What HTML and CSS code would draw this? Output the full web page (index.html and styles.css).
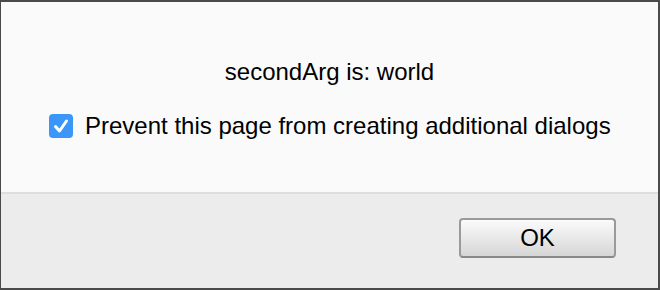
FILE: index.html
```html
<!DOCTYPE html>
<html>
<head>
  <title>Alert</title>
  <link rel="stylesheet" href="styles.css">
</head>
<body>
  <div class="dialog">
    <div class="dialog-body">
      <p class="message">secondArg is: world</p>
      <label class="prevent">
        <span class="checkbox">
          <svg width="24" height="24" viewBox="0 0 24 24">
            <path d="M6.5 12.5 L10.5 17 L17.5 7" fill="none" stroke="#fff" stroke-width="3" stroke-linecap="round" stroke-linejoin="round"/>
          </svg>
        </span>
        Prevent this page from creating additional dialogs
      </label>
    </div>
    <div class="dialog-footer">
      <button class="ok-button">OK</button>
    </div>
  </div>
</body>
</html>
```

FILE: styles.css
```css
body {
  margin: 0;
  font-family: "Liberation Sans", Arial, sans-serif;
}
.dialog {
  box-sizing: border-box;
  width: 660px;
  height: 290px;
  border: 2px solid #4a4a4a;
  border-left-width: 1px;
  display: flex;
  flex-direction: column;
}
.dialog-body {
  box-sizing: border-box;
  height: 192px;
  background-color: #fafafa;
  border-bottom: 2px solid #dedede;
  padding: 56px 0 0 48px;
}
.message {
  margin: 0 0 26px -48px;
  text-align: center;
  font-size: 24px;
  line-height: 28px;
  color: #000;
}
.prevent {
  display: flex;
  align-items: center;
  gap: 12px;
  font-size: 24px;
  line-height: 28px;
  color: #000;
}
.checkbox {
  width: 24px;
  height: 24px;
  border-radius: 4px;
  background-color: #3a97f9;
  display: flex;
}
.dialog-footer {
  flex: 1;
  background-color: #ececec;
  display: flex;
  justify-content: flex-end;
  align-items: flex-start;
  padding: 24px 42px 0 0;
}
.ok-button {
  width: 157px;
  height: 40px;
  border: 2px solid #9a9a9a;
  border-bottom-color: #888;
  border-radius: 4px;
  background: linear-gradient(#fbfbfb, #d6d6d6);
  font-family: "Liberation Sans", Arial, sans-serif;
  font-size: 24px;
  color: #000;
  padding: 0;
}
```
